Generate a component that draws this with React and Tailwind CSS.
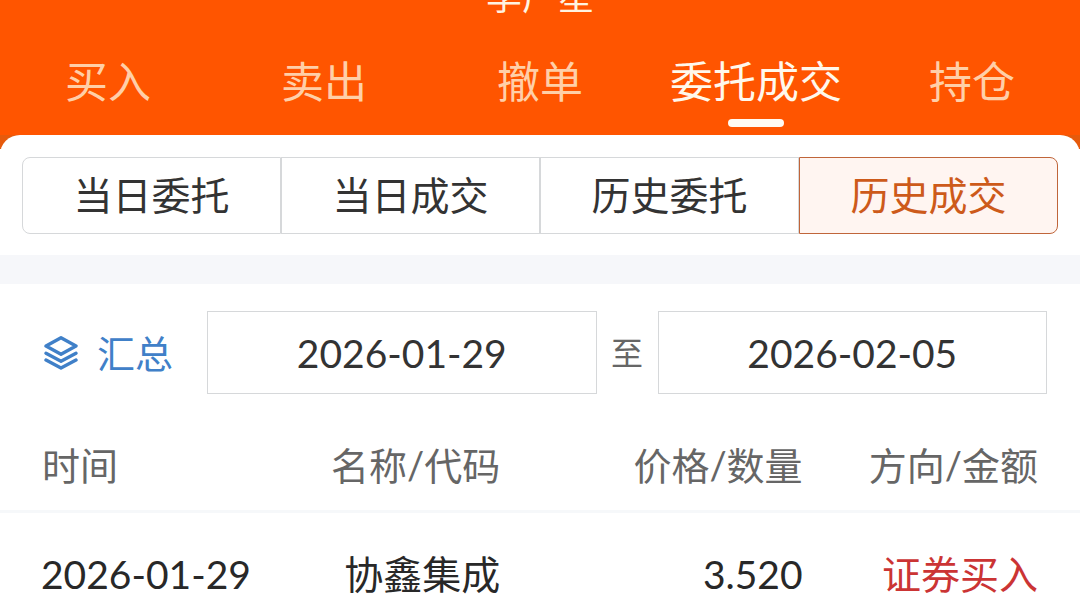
import React, { useState } from "react";

const mainTabs = ["买入", "卖出", "撤单", "委托成交", "持仓"];
const subTabs = ["当日委托", "当日成交", "历史委托", "历史成交"];

const records = [
  { date: "2026-01-29", name: "协鑫集成", price: "3.520", side: "证券买入" },
];

const LayersIcon = () => (
  <svg
    viewBox="0 0 34 34"
    className="w-[34px] h-[34px]"
    fill="none"
    stroke="currentColor"
    strokeWidth="3.4"
    strokeLinecap="round"
    strokeLinejoin="round"
    aria-hidden="true"
  >
    <path d="M17 1.8 L32 10 L17 18.2 L2 10 Z" />
    <path d="M2 17.2 L17 25.2 L32 17.2" />
    <path d="M2 24 L17 32 L32 24" />
  </svg>
);

const DateInput = ({ label, value, onChange }) => (
  <input
    type="text"
    aria-label={label}
    value={value}
    onChange={(e) => onChange(e.target.value)}
    className="flex-1 min-w-0 h-[83px] border border-[#d6d8da] bg-white text-center text-[39px] text-[#333333] outline-none"
  />
);

const App = () => {
  const [mainTab, setMainTab] = useState("委托成交");
  const [subTab, setSubTab] = useState("历史成交");
  const [start, setStart] = useState("2026-01-29");
  const [end, setEnd] = useState("2026-02-05");

  return (
    <div className="min-h-screen bg-white font-['Lato','Noto_Sans_CJK_SC',sans-serif]">
      <header className="bg-[#ff5500]">
        <div className="flex h-4 items-end justify-center overflow-hidden">
          <h1 className="text-[36px] leading-[40px] text-[#fff3e0]">李广星</h1>
        </div>
        <nav className="grid grid-cols-5 pt-9 pb-2">
          {mainTabs.map((tab) => (
            <button
              key={tab}
              type="button"
              onClick={() => setMainTab(tab)}
              className={`flex flex-col items-center text-[43px] leading-[60px] ${
                tab === mainTab ? "text-[#fff8ec]" : "text-[#ffcfa8]"
              }`}
            >
              {tab}
              <span
                className={`mt-[7px] h-2 w-14 rounded-full ${
                  tab === mainTab ? "bg-[#fffaf2]" : "bg-transparent"
                }`}
              />
            </button>
          ))}
        </nav>
      </header>

      <main>
        <div className="bg-linear-to-b from-[#e65a0c] from-[14px] to-white to-[14px]">
          <div className="rounded-t-[20px] bg-white px-[22px] pt-[22px] pb-[21px]">
            <div className="grid grid-cols-4">
              {subTabs.map((tab) => (
                <button
                  key={tab}
                  type="button"
                  onClick={() => setSubTab(tab)}
                  className={`h-[77px] border pb-0.5 text-[39px] leading-[56px] first:rounded-l-lg last:rounded-r-lg ${
                    tab === subTab
                      ? "border-[#c0653a] bg-[#fff5f1] text-[#cd5a1a]"
                      : "border-[#d6d8da] bg-white text-[#333333]"
                  }`}
                >
                  {tab}
                </button>
              ))}
            </div>
          </div>
        </div>

        <div className="h-[29px] bg-[#f6f7fa]" />

        <div className="flex items-center pt-[27px] pr-[33px] pl-11">
          <button
            type="button"
            className="mr-[34px] flex items-center gap-[19px] text-[38px] leading-[56px] text-[#4080c8]"
          >
            <LayersIcon />
            汇总
          </button>
          <DateInput label="开始日期" value={start} onChange={setStart} />
          <span className="w-[61px] text-center text-[32px] leading-[48px] text-[#666666]">至</span>
          <DateInput label="结束日期" value={end} onChange={setEnd} />
        </div>

        <table className="mt-11 w-full table-fixed">
          <thead>
            <tr className="border-b-[3px] border-[#f6f8fa] text-[38px] leading-[54px] text-[#666666]">
              <th className="w-[28%] pb-[18px] pl-[42px] text-left font-normal">时间</th>
              <th className="w-[18.5%] pr-0.5 pb-[18px] text-right font-normal">名称/代码</th>
              <th className="w-[28%] pr-0.5 pb-[18px] text-right font-normal">价格/数量</th>
              <th className="pr-[42px] pb-[18px] text-right font-normal">方向/金额</th>
            </tr>
          </thead>
          <tbody>
            {records.map((item) => (
              <tr key={item.date + item.name} className="text-[39px] leading-[54px] text-[#282828]">
                <td className="pt-[34px] pl-[41px]">{item.date}</td>
                <td className="pt-[34px] pr-0.5 text-right">{item.name}</td>
                <td className="pt-[34px] pr-0.5 text-right">{item.price}</td>
                <td className="pt-[34px] pr-[42px] text-right text-[#cb3434]">{item.side}</td>
              </tr>
            ))}
          </tbody>
        </table>
      </main>
    </div>
  );
};

export default App;
